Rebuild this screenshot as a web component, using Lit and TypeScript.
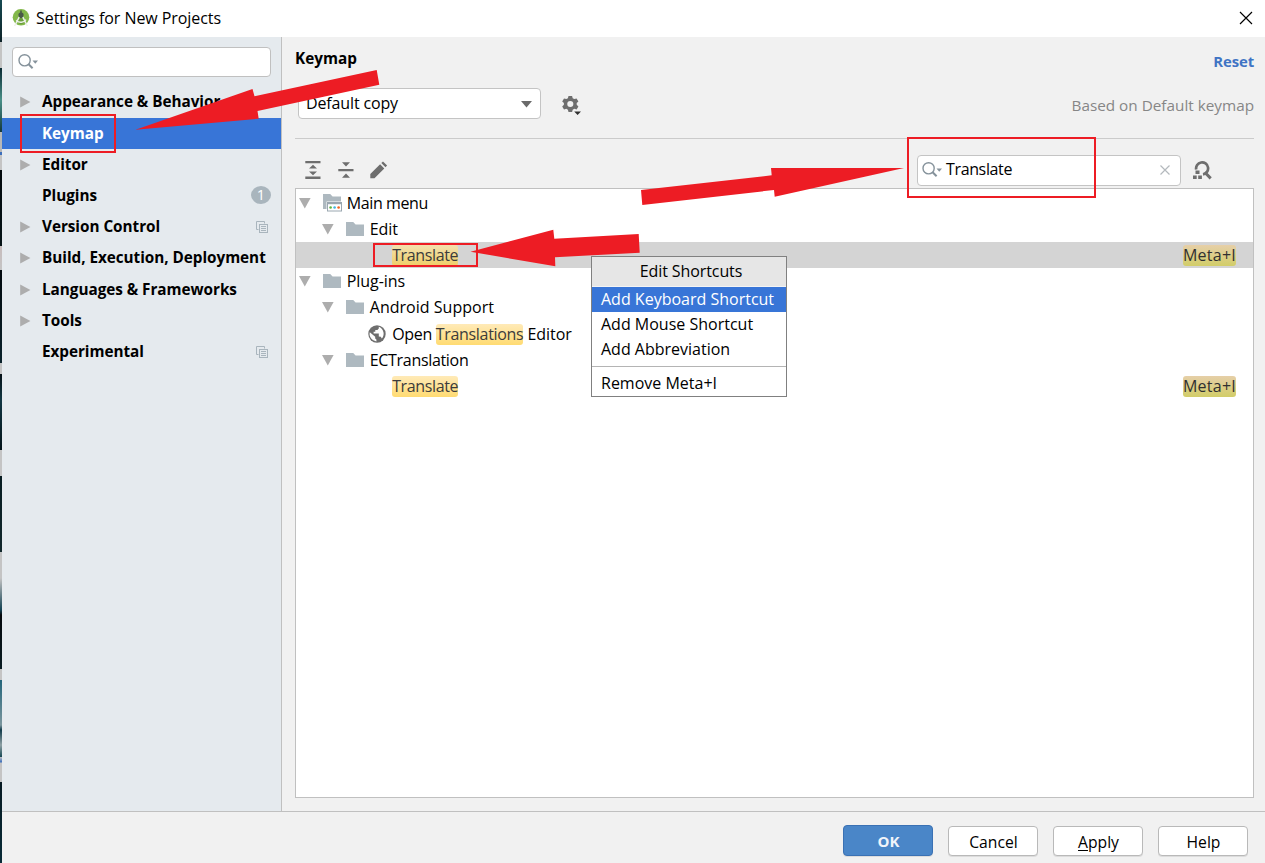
import { LitElement, html, svg, css, nothing } from "lit";
import { customElement } from "lit/decorators.js";
import { classMap } from "lit/directives/class-map.js";

interface NavItem {
  label: string;
  expandable?: boolean;
  selected?: boolean;
  badge?: string;
  project?: boolean;
}

interface TreeItem {
  depth: number;
  icon?: "menu" | "folder" | "globe";
  expanded?: boolean;
  before?: string;
  match?: string;
  after?: string;
  spacing: number;
  selected?: boolean;
  shortcut?: string;
}

const NAV: NavItem[] = [
  { label: "Appearance & Behavior", expandable: true },
  { label: "Keymap", selected: true },
  { label: "Editor", expandable: true },
  { label: "Plugins", badge: "1" },
  { label: "Version Control", expandable: true, project: true },
  { label: "Build, Execution, Deployment", expandable: true },
  { label: "Languages & Frameworks", expandable: true },
  { label: "Tools", expandable: true },
  { label: "Experimental", project: true },
];

const TREE: TreeItem[] = [
  { depth: 0, icon: "menu", expanded: true, before: "Main menu", spacing: -0.4 },
  { depth: 1, icon: "folder", expanded: true, before: "Edit", spacing: -0.1 },
  { depth: 2, match: "Translate", spacing: -0.36, selected: true, shortcut: "Meta+I" },
  { depth: 0, icon: "folder", expanded: true, before: "Plug-ins", spacing: -0.05 },
  { depth: 1, icon: "folder", expanded: true, before: "Android Support", spacing: 0.02 },
  { depth: 2, icon: "globe", before: "Open ", match: "Translations", after: " Editor", spacing: -0.32 },
  { depth: 1, icon: "folder", expanded: true, before: "ECTranslation", spacing: -0.32 },
  { depth: 2, match: "Translate", spacing: -0.36, shortcut: "Meta+I" },
];

const magnifier = html`<svg class="mag" width="22" height="18" viewBox="0 0 22 18">
  <circle cx="6.600" cy="7.300" r="5.600" fill="none" stroke="#85929b" stroke-width="1.400" />
  <path d="M10.600 11.300l4 4" stroke="#85929b" stroke-width="2" />
  <path d="M14.500 7.500h5.500l-2.750 3.200z" fill="#85929b" />
</svg>`;

const projectIcon = html`<svg class="project" width="12" height="12" viewBox="0 0 12 12" fill="none" stroke="#a9b5bd">
  <path d="M2.500 8.500h-2v-8h8v2" />
  <rect x="3.500" y="3.500" width="8" height="8" />
  <path d="M5 5.500h5M5 7.500h5M5 9.500h5" />
</svg>`;

const folderPath = svg`<path d="M0 1h7.200l2.400 2.600H18V15H0z" fill="#aeb9c0" />`;

const icons = {
  folder: html`<svg width="18" height="16" viewBox="0 0 18 16">${folderPath}</svg>`,
  menu: html`<svg width="19" height="19" viewBox="0 0 19 19">
    <path d="M0 1h7.200l2.400 2.600H18V8.500H3.500V16H0z" fill="#aeb9c0" />
    <rect x="4.500" y="9.500" width="14" height="8.500" fill="#fff" stroke="#9aa7b0" />
    <path d="M4 10.200h15" stroke="#9aa7b0" stroke-width="2" />
    <circle cx="7.600" cy="14.500" r="1.300" fill="#62b543" />
    <circle cx="11.600" cy="14.500" r="1.300" fill="#40b6e0" />
    <circle cx="15.600" cy="14.500" r="1.300" fill="#f26522" />
  </svg>`,
  globe: html`<svg width="18" height="18" viewBox="0 0 18 18">
    <circle cx="9" cy="9" r="8.700" fill="#6e6e6e" />
    <path d="M1.800 7.200l5.400 4.600v1.600l1.200 1.200v1.900A7.500 7.500 0 0 1 1.800 7.200zM10.800 1.800v1.600L9.400 5H7.300v1.800H5.600v1.700h5.200v3l2 .2 1 1.900a7.400 7.400 0 0 0-3-11.800z" fill="#fff" />
  </svg>`,
};

@customElement("settings-nav")
class SettingsNav extends LitElement {
  static styles = css`
    :host { display: flex; flex-direction: column; box-sizing: border-box; width: 280px; background: #e5eaee; border-right: 1px solid #c0c0c0; padding-top: 10px; }
    .search { display: flex; align-items: center; box-sizing: border-box; margin: 0 10px; height: 30px; border: 1px solid #c0c0c0; border-radius: 4px; background: #fff; padding-left: 5px; width: 259px; }
    .list { display: flex; flex-direction: column; padding-top: 9.75px; }
    .row { display: flex; align-items: center; height: 31.22px; padding: 0 13px 0 18px; font-weight: 700; font-size: 15.3px; letter-spacing: -.04px; white-space: pre; }
    .row.selected { background: #3875d7; color: #fff; }
    .twisty { width: 22px; display: flex; }
    .label { flex: 1; padding-bottom: 2px; }
    .badge { width: 20px; height: 18px; border-radius: 50%; background: #a9b5bd; color: #fff; font-weight: 400; font-size: 14.5px; line-height: 18px; text-align: center; margin: 0 -3px 2px 0; }
    .project { margin-bottom: 1px; }
  `;
  render() {
    return html`
      <div class="search">${magnifier}</div>
      <div class="list">
        ${NAV.map((n) => html`<div class=${classMap({ row: true, selected: !!n.selected })}>
          <span class="twisty">${n.expandable ? html`<svg width="11" height="12" viewBox="0 0 11 12"><path d="M.2.6L10.400 6 .2 11.400z" fill="#adadad" /></svg>` : nothing}</span>
          <span class="label">${n.label}</span>
          ${n.badge ? html`<span class="badge">${n.badge}</span>` : nothing}
          ${n.project ? projectIcon : nothing}
        </div>`)}
      </div>`;
  }
}

@customElement("keymap-tree")
class KeymapTree extends LitElement {
  static styles = css`
    :host { display: block; box-sizing: border-box; border: 1px solid #c0c0c0; background: #fff; padding-top: .6px; font-size: 16px; }
    .row { display: flex; align-items: center; height: 26.2px; padding: 0 17px 0 3.4px; }
    .selected { background: #d4d4d4; }
    .indent { flex: none; width: 23px; }
    .twisty { flex: none; width: 23.4px; display: flex; }
    .icon { flex: none; width: 24px; display: flex; }
    .globe { margin-left: -.6px; width: 24px; }
    .gap { flex: none; width: 23.400px; }
    .text { flex: 1; line-height: 22px; white-space: pre; }
    .hit { display: inline-block; height: 21px; line-height: 21px; border-radius: 3px; color: #3c3c3c; background: linear-gradient(#ffeab8, #ffdb72); }
    .after { letter-spacing: -.05px; }
    .selected .hit { background: linear-gradient(#f3e0ae, #efcf68); }
    .key { height: 21px; line-height: 20px; border-radius: 3px; letter-spacing: .25px; color: #303030; background: linear-gradient(#e6cfa8, #d2cd68); }
  `;
  render() {
    return TREE.map((t) => html`<div class=${classMap({ row: true, selected: !!t.selected })}>
      ${Array.from({ length: t.depth }, () => html`<span class="indent"></span>`)}
      ${t.expanded ? html`<span class="twisty"><svg width="12" height="12" viewBox="0 0 12 12"><path d="M0 1h11.600L5.800 11.600z" fill="#adadad" /></svg></span>` : html`<span class="gap"></span>`}
      ${t.icon ? html`<span class=${classMap({ icon: true, globe: t.icon === "globe" })}>${icons[t.icon]}</span>` : html`<span class="gap"></span>`}
      <span class="text" style="letter-spacing:${t.spacing}px">${t.before ?? nothing}${t.match ? html`<span class="hit">${t.match}</span>` : nothing}${t.after ? html`<span class="after">${t.after}</span>` : nothing}</span>
      ${t.shortcut ? html`<span class="key">${t.shortcut}</span>` : nothing}
    </div>`);
  }
}

@customElement("shortcut-menu")
class ShortcutMenu extends LitElement {
  static styles = css`
    :host { display: block; box-sizing: border-box; width: 196px; height: 141px; border: 1px solid #808080; background: #fff; font-size: 16px; }
    .title { height: 29px; line-height: 29px; text-align: center; background: #e6e6e6; border-bottom: 1px solid #f4f4f4; padding-left: 4px; letter-spacing: -.1px; }
    .item { height: 25px; line-height: 25px; padding-left: 9px; white-space: nowrap; }
    .active { background: #3875d7; color: #fff; }
    .rule { height: 1px; background: #b4b4b4; margin: 4px 0; }
  `;
  render() {
    return html`<div class="title">Edit Shortcuts</div>
      <div class="item active">Add Keyboard Shortcut</div>
      <div class="item">Add Mouse Shortcut</div>
      <div class="item">Add Abbreviation</div>
      <div class="rule"></div>
      <div class="item">Remove Meta+I</div>`;
  }
}

@customElement("app-root")
class AppRoot extends LitElement {
  static styles = css`
    :host { display: flex; position: relative; box-sizing: border-box; width: 1265px; height: 863px; overflow: hidden; background: #f1f1f1; color: #000; font-family: "Open Sans", "Noto Sans", sans-serif; font-size: 16px; }
    .desktop { flex: none; width: 2px; background: linear-gradient(#174a52 0, #0d2228 42px, #c4c4c4 42px, #c4c4c4 68px, #0a2a33 68px, #4a9088 100px, #14383c 132px, #b8b8b8 132px, #b8b8b8 152px, #3c6fbc 152px, #3c6fbc 155px, #c4c4c4 155px, #c4c4c4 170px, #02090c 170px, #061417 246px, #c7bcbc 246px, #c4c4c4 270px, #020a0e 270px, #0a222b 363px, #c4c4c4 363px, #c4c4c4 374px, #061217 374px, #123743 400px, #04141a 450px, #c4c4c4 450px, #c4c4c4 476px, #081d22 476px, #12282c 552px, #c4c4c4 552px, #c4c4c4 578px, #124152 610px, #05090c 615px, #0a1d23 669px, #c4c4c4 669px, #c4c4c4 680px, #23657a 680px, #7b969e 725px, #123c4b 730px, #8fa1a5 745px, #164853 757px, #c4c4c4 757px, #3c6fbc 762px, #c4c4c4 763px, #c4c4c4 782px, #061a22 782px, #0a2c38 863px); }
    .window { flex: 1; display: flex; flex-direction: column; min-width: 0; }
    .titlebar { display: flex; align-items: center; box-sizing: border-box; height: 37px; background: #fff; padding: 0 12px 2px 10px; }
    .logo { margin-right: 6px; }
    .caption { flex: 1; letter-spacing: -.06px; }
    .body { flex: none; display: flex; height: 774px; }
    .main { flex: 1; display: flex; flex-direction: column; min-width: 0; padding: 0 11px 13px 13px; }
    .head { display: flex; justify-content: space-between; height: 50px; font-weight: 700; font-size: 15.3px; }
    .heading { line-height: 42px; }
    .reset { line-height: 49px; color: #3f74c4; font-size: 14.9px; letter-spacing: -.1px; }
    .scheme { display: flex; align-items: center; height: 33px; }
    .combo { display: flex; align-items: center; justify-content: space-between; box-sizing: border-box; width: 243px; height: 31px; margin-left: 3px; padding: 0 8px 2px 7px; border: 1px solid #c4c4c4; border-radius: 4px; background: #fff; letter-spacing: -.14px; }
    .combo svg { margin-top: 3px; }
    .gear { margin: 4px 0 0 20px; }
    .based { margin-left: auto; margin-top: 2px; color: #868686; font-size: 15.3px; }
    .divider { flex: none; height: 1px; background: #cbcbcb; margin-top: 18px; }
    .tools { display: flex; align-items: center; height: 49px; padding-left: 9px; }
    .tools .tool { margin-right: 15px; margin-top: 12px; }
    .find { display: flex; align-items: center; box-sizing: border-box; width: 264px; height: 31px; margin: 13px 0 0 auto; border: 1px solid #c4c4c4; border-radius: 4px; background: #fff; padding: 0 10px 0 4px; }
    .query { flex: 1; margin-left: 2px; padding-bottom: 2px; letter-spacing: -.36px; }
    .person { margin: 13px 41px 0 11px; }
    .tree { flex: 1; }
    .footer { flex: 1; display: flex; justify-content: flex-end; gap: 15px; border-top: 1px solid #c0c0c0; padding: 14px 17px 0 0; }
    .btn { box-sizing: border-box; width: 90px; height: 30px; border: 1px solid #b9b9b9; border-radius: 4px; background: #fff; line-height: 30px; text-align: center; font-size: 15.7px; box-shadow: 0 1px 0 #dcdcdc; padding-left: 1px; }
    .ok { height: 31px; margin-top: -1px; width: 90px; background: #4a86c8; border-color: #3a71b4; color: #f0f4fa; font-weight: 700; font-size: 15px; line-height: 31px; }
    .menu { position: absolute; left: 591px; top: 256px; }
    .marks { position: absolute; left: 0; top: 0; pointer-events: none; }
    u { text-underline-offset: 2px; text-decoration-thickness: 1px; text-decoration-skip-ink: none; }
  `;
  render() {
    return html`
      <div class="desktop"></div>
      <div class="window">
        <div class="titlebar">
          <svg class="logo" width="18" height="20" viewBox="0 0 18 20">
            <circle cx="9" cy="9.300" r="8.300" fill="#83b84a" />
            <path d="M9 5l2.300 4.500 3 4.200L9 16.500l-5.200-3z" fill="#6b9d3c" />
            <path d="M8.200 2.600h1.600v2A2.700 2.700 0 0 1 11.400 8l-1 2H7.600l-1-2a2.700 2.700 0 0 1 1.600-3.400z" fill="#4a5a48" />
            <path d="M7.200 9.200L2.600 18M10.800 9.200L15.400 18M4.200 12.200c3 3.200 7.600 2.600 9.800-.6" fill="none" stroke="#eef1ec" stroke-width="1.500" />
          </svg>
          <span class="caption">Settings for New Projects</span>
          <svg width="14" height="14" viewBox="0 0 14 14"><path d="M1 1l12 12M13 1L1 13" stroke="#000" stroke-width="1.150" /></svg>
        </div>
        <div class="body">
          <settings-nav></settings-nav>
          <div class="main">
            <div class="head"><span class="heading">Keymap</span><span class="reset">Reset</span></div>
            <div class="scheme">
              <div class="combo"><span>Default copy</span><svg width="11" height="7" viewBox="0 0 11 7"><path d="M0 0h11L5.500 6.600z" fill="#6a6a6a" /></svg></div>
              <svg class="gear" width="21" height="21" viewBox="0 0 21 21">
                <path fill="#6e6e6e" fill-rule="evenodd" d="M7.500 1h3.600l.6 2.200 1.600.9 2.300-.7 1.800 3.100-1.700 1.600v1.700l1.700 1.600-1.800 3.100-2.300-.7-1.600.9-.6 2.200H7.500l-.6-2.200-1.600-.9-2.300.7-1.800-3.100 1.700-1.600V8.100L1.200 6.500 3 3.400l2.300.7 1.600-.9zM9.300 5.900a3 3 0 1 0 0 6.100 3 3 0 0 0 0-6.100z" />
                <path d="M12 15.800h9L16.500 21z" fill="#f1f1f1" /><path d="M13.200 16.600h6.800L16.600 20z" fill="#303030" />
              </svg>
              <span class="based">Based on Default keymap</span>
            </div>
            <div class="divider"></div>
            <div class="tools">
              <svg class="tool" width="18" height="18" viewBox="0 0 18 18" fill="#6e6e6e"><path d="M1.300 0h15.200v2.300H1.300zM1.300 15.500h15.200v2.400H1.300zM9 3.800l4 3.800H5zM5 10.400h8L9 14.200z" /></svg>
              <svg class="tool" width="18" height="18" viewBox="0 0 18 18" fill="#6e6e6e"><path d="M1.300 8h15.200v2.300H1.300zM5 1.300h8L9 5.600zM9 12.400l4 4.400H5z" /></svg>
              <svg class="tool" width="18" height="18" viewBox="0 0 18 18" fill="#6e6e6e"><path d="M.3 17.200v-4.300l9.800-9.700 4.200 4.200-9.800 9.800zM11.300 2L13 .4l4.100 4.100-1.600 1.700z" /></svg>
              <div class="find">
                ${magnifier}<span class="query">Translate</span>
                <svg width="10" height="10" viewBox="0 0 10 10"><path d="M.5.5l9 9M9.500.5l-9 9" stroke="#b4b9bd" stroke-width="1.200" /></svg>
              </div>
              <svg class="person" width="21" height="19" viewBox="0 0 21 19">
                <path d="M4.200 8.500A6 6 0 1 1 11 13.300" fill="none" stroke="#6e6e6e" stroke-width="2.700" />
                <path d="M13 11.500l5.700 5.900" stroke="#6e6e6e" stroke-width="3" />
                <path d="M3.500 9.500h4v3.600h-4zM1 14.500h3.700V18H1zM6.200 14.500h3.700V18H6.200z" fill="#6e6e6e" />
              </svg>
            </div>
            <keymap-tree class="tree"></keymap-tree>
          </div>
        </div>
        <div class="footer">
          <div class="btn ok">OK</div>
          <div class="btn">Cancel</div>
          <div class="btn"><u>A</u>pply</div>
          <div class="btn">Help</div>
        </div>
      </div>
      <svg class="marks" width="1265" height="863" viewBox="0 0 1265 863">
        <g fill="none" stroke="#ed1c24" stroke-width="2">
          <rect x="21" y="115" width="94" height="37" />
          <rect x="374" y="244" width="103" height="22" />
          <rect x="908" y="138" width="187" height="59" />
        </g>
        <g fill="#ed1c24">
          <path d="M135.500 129.700L252.500 89l2 7.300L376.700 70l2.600 14.700L257.500 111l1.200 7.700z" />
          <path d="M470.500 251.700l82.800-22 1 9 84.400-4.700 1 18.700-84.700 4.600.3 9z" />
          <path d="M904 168H771l.7 7.300L641 190l1.300 15L774 190l.7 6.700z" />
        </g>
      </svg>
      <shortcut-menu class="menu"></shortcut-menu>`;
  }
}
